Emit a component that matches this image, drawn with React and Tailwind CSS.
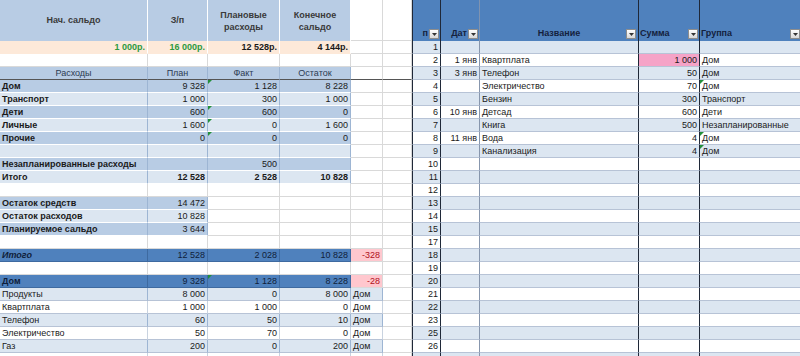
import React from "react";

const W = "bg-white border-r-[#d9d9d9] border-b-[#d9d9d9]";
const D = "bg-[#b8cce4] border-r-[#9db5d3] border-b-white";
const L = "bg-[#dce6f1] border-r-[#9db5d3] border-b-white";
const BL = "bg-[#4f81bd] border-r-[#3e6aa0] border-b-[#3e6aa0] text-[#0f1e3a]";
const PK = "bg-[#ffc7ce] border-r-[#d9d9d9] border-b-[#d9d9d9] text-[#b0101c]";
const PE = "bg-[#fde9d9] border-r-white border-b-[#fde9d9]";
const WB = "bg-white border-r-[#c9d3e0] border-b-[#b7c3d6]";
const LB = "bg-[#dce6f1] border-r-[#9db5d3] border-b-[#b7c3d6]";

const leftRows = [
  [
    ["1 000р.", PE + " text-right font-bold text-[#2e9a3e]"],
    ["16 000р.", PE + " text-right font-bold text-[#2e9a3e]"],
    ["12 528р.", PE + " text-right font-bold"],
    ["4 144р.", PE + " text-right font-bold"],
    ["", W],
    ["", W],
  ],
  [["", W], ["", W], ["", W], ["", W], ["", W], ["", W]],
  [
    ["Расходы", D + " text-center text-[#2c3b52] !border-b-[#555]"],
    ["План", D + " text-center text-[#2c3b52] !border-b-[#555]"],
    ["Факт", D + " text-center text-[#2c3b52] !border-b-[#555]"],
    ["Остаток", D + " text-center text-[#2c3b52] !border-b-[#555]"],
    ["", W + " !border-b-[#555]"],
    ["", W + " !border-b-[#555]"],
  ],
  [["Дом", D + " font-bold"], ["9 328", D + " text-right"], ["1 128", D + " text-right", 1], ["8 228", D + " text-right"], ["", W], ["", W]],
  [["Транспорт", L + " font-bold"], ["1 000", L + " text-right"], ["300", L + " text-right"], ["1 000", L + " text-right"], ["", W], ["", W]],
  [["Дети", D + " font-bold"], ["600", D + " text-right"], ["600", D + " text-right", 1], ["0", D + " text-right"], ["", W], ["", W]],
  [["Личные", L + " font-bold"], ["1 600", L + " text-right"], ["0", L + " text-right", 1], ["1 600", L + " text-right"], ["", W], ["", W]],
  [["Прочие", D + " font-bold"], ["0", D + " text-right"], ["0", D + " text-right", 1], ["0", D + " text-right"], ["", W], ["", W]],
  [["", L], ["", L], ["", L], ["", L], ["", W], ["", W]],
  [["Незапланированные расходы", D + " font-bold"], ["", D], ["500", D + " text-right"], ["", D], ["", W], ["", W]],
  [["Итого", L + " font-bold"], ["12 528", L + " text-right font-bold"], ["2 528", L + " text-right font-bold"], ["10 828", L + " text-right font-bold"], ["", W], ["", W]],
  [["", W], ["", W], ["", W], ["", W], ["", W], ["", W]],
  [["Остаток средств", D + " font-bold"], ["14 472", D + " text-right"], ["", W], ["", W], ["", W], ["", W]],
  [["Остаток расходов", L + " font-bold"], ["10 828", L + " text-right"], ["", W], ["", W], ["", W], ["", W]],
  [["Планируемое сальдо", D + " font-bold"], ["3 644", D + " text-right"], ["", W], ["", W], ["", W], ["", W]],
  [["", W], ["", W], ["", W], ["", W], ["", W], ["", W]],
  [["Итого", BL + " font-bold italic"], ["12 528", BL + " text-right"], ["2 028", BL + " text-right"], ["10 828", BL + " text-right"], ["-328", PK + " text-right"], ["", W]],
  [["", W], ["", W], ["", W], ["", W], ["", W], ["", W]],
  [["Дом", BL + " font-bold"], ["9 328", BL + " text-right"], ["1 128", BL + " text-right", 1], ["8 228", BL + " text-right"], ["-28", PK + " text-right"], ["", W]],
  [["Продукты", LB], ["8 000", LB + " text-right"], ["0", LB + " text-right"], ["8 000", LB + " text-right"], ["Дом", LB], ["", W]],
  [["Квартплата", WB], ["1 000", WB + " text-right"], ["1 000", WB + " text-right"], ["0", WB + " text-right"], ["Дом", WB], ["", W]],
  [["Телефон", LB], ["60", LB + " text-right"], ["50", LB + " text-right"], ["10", LB + " text-right"], ["Дом", LB], ["", W]],
  [["Электричество", WB], ["50", WB + " text-right"], ["70", WB + " text-right"], ["0", WB + " text-right"], ["Дом", WB], ["", W]],
  [["Газ", LB], ["200", LB + " text-right"], ["0", LB + " text-right"], ["200", LB + " text-right"], ["Дом", LB], ["", W]],
  [["", WB], ["", WB], ["", WB], ["", WB], ["", WB], ["", W]],
];

// rows 16 and 24 are hidden in the sheet
const nums = [1, 2, 3, 4, 5, 6, 7, 8, 9, 10, 11, 12, 13, 14, 15, 17, 18, 19, 20, 21, 22, 23, 25, 26, 27];

const entries = {
  2: { d: "1 янв", name: "Квартплата", sum: "1 000", grp: "Дом", pink: true },
  3: { d: "3 янв", name: "Телефон", sum: "50", grp: "Дом" },
  4: { name: "Электричество", sum: "70", grp: "Дом", tri: true },
  5: { name: "Бензин", sum: "300", grp: "Транспорт" },
  6: { d: "10 янв", name: "Детсад", sum: "600", grp: "Дети" },
  7: { name: "Книга", sum: "500", grp: "Незапланированные" },
  8: { d: "11 янв", name: "Вода", sum: "4", grp: "Дом", tri: true },
  9: { name: "Канализация", sum: "4", grp: "Дом", tri: true },
};

function Tri() {
  return (
    <span className="absolute left-0 top-0 w-0 h-0 border-t-[4px] border-r-[4px] border-t-[#23903a] border-r-transparent" />
  );
}

function Cell({ v, cls, tri }) {
  return (
    <div className={`relative h-[13px] leading-[12px] px-[2px] whitespace-nowrap overflow-hidden border-r border-b ${cls}`}>
      {tri ? <Tri /> : null}
      {v}
    </div>
  );
}

function Filter() {
  return (
    <span className="flex items-center justify-center w-[10px] h-[10px] shrink-0 border border-[#8d8d8d] bg-gradient-to-b from-white to-[#d8d8d8]">
      <svg width="5" height="3" viewBox="0 0 5 3">
        <path d="M0 0h5L2.5 3z" fill="#333" />
      </svg>
    </span>
  );
}

function LeftSheet() {
  return (
    <div className="w-[412px] shrink-0">
      <div className="grid grid-cols-[148px_60px_72px_71px_32px_29px] h-[41px]">
        <div className="flex items-center justify-center bg-[#b8cce4] border-r border-white text-[#3a3a3a] font-bold">Нач. сальдо</div>
        <div className="flex items-center justify-center bg-[#b8cce4] border-r border-white text-[#3a3a3a] font-bold">З/п</div>
        <div className="flex items-center justify-center text-center leading-[12px] bg-[#b8cce4] border-r border-white text-[#3a3a3a] font-bold">
          Плановые<br />расходы
        </div>
        <div className="flex items-center justify-center text-center leading-[12px] bg-[#b8cce4] border-r border-white text-[#3a3a3a] font-bold">
          Конечное<br />сальдо
        </div>
        <div className="bg-white border-r border-b border-[#d9d9d9]" />
        <div className="bg-white border-r border-b border-[#d9d9d9]" />
      </div>
      <div className="grid grid-cols-[148px_60px_72px_71px_32px_29px]">
        {leftRows.map((row, i) =>
          row.map((c, j) => <Cell key={i + "-" + j} v={c[0]} cls={c[1]} tri={c[2]} />)
        )}
      </div>
    </div>
  );
}

function RightTable() {
  return (
    <div className="flex-1">
      <div className="grid grid-cols-[29px_39px_159px_61px_100px] h-[41px] bg-[#4f81bd] text-[#14213d] font-bold">
        <div className="flex items-end justify-end gap-[1px] pb-[2px] pr-[1px] border-l border-r border-[#1f2838]">
          <span className="leading-[11px]">п</span>
          <Filter />
        </div>
        <div className="flex items-end justify-end gap-[1px] pb-[2px] pr-[1px] border-r border-[#7f93b0]">
          <span className="leading-[11px]">Дат</span>
          <Filter />
        </div>
        <div className="flex items-end pb-[2px] pr-[2px] border-r border-[#1f2838]">
          <span className="flex-1 text-center pl-[12px] leading-[11px]">Название</span>
          <Filter />
        </div>
        <div className="flex items-end justify-between pb-[2px] pl-[1px] pr-[1px] border-r border-[#1f2838]">
          <span className="leading-[11px]">Сумма</span>
          <Filter />
        </div>
        <div className="flex items-end justify-between pb-[2px] pl-[1px]">
          <span className="leading-[11px]">Группа</span>
          <Filter />
        </div>
      </div>
      <div className="grid grid-cols-[29px_39px_159px_61px_100px]">
        {nums.map((n, i) => {
          const e = entries[n] || {};
          const band = i % 2 === 0 ? "bg-[#dce6f1]" : "bg-white";
          return (
            <React.Fragment key={n}>
              <div className={`h-[13px] leading-[12px] pr-[2px] text-right border-l border-r border-l-[#1f2838] border-r-[#1f2838] border-b border-b-[#b7c3d6] ${band}`}>{n < 27 ? n : ""}</div>
              <div className={`h-[13px] leading-[12px] pr-[2px] text-right whitespace-nowrap border-r border-r-[#8796ad] border-b border-b-[#b7c3d6] ${band}`}>{e.d}</div>
              <div className={`h-[13px] leading-[12px] pl-[2px] whitespace-nowrap border-r border-r-[#1f2838] border-b border-b-[#b7c3d6] ${band}`}>{e.name}</div>
              <div className={`h-[13px] leading-[12px] pr-[2px] text-right border-r border-r-[#1f2838] border-b border-b-[#b7c3d6] ${e.pink ? "bg-[#f5a3c7]" : band}`}>{e.sum}</div>
              <div className={`relative h-[13px] leading-[12px] pl-[2px] whitespace-nowrap border-b border-b-[#b7c3d6] ${band}`}>
                {e.tri ? <Tri /> : null}
                {e.grp}
              </div>
            </React.Fragment>
          );
        })}
      </div>
    </div>
  );
}

export default function App() {
  return (
    <div className="w-[800px] h-[356px] overflow-hidden flex bg-white text-[9px] text-[#1a1a1a] font-['Liberation_Sans',Arial,sans-serif]">
      <LeftSheet />
      <RightTable />
    </div>
  );
}
